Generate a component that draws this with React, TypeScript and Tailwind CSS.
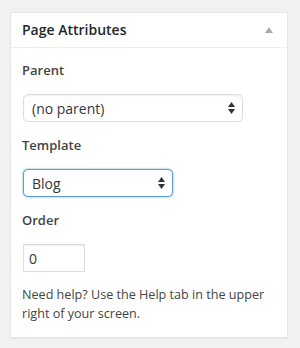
import { useState } from "react";

const font = { fontFamily: '"Open Sans", "Noto Sans", sans-serif' };

export default function App() {
  const [parent, setParent] = useState("");
  const [template, setTemplate] = useState("blog");
  const [order, setOrder] = useState("0");

  return (
    <div className="h-[348px] w-[300px] bg-[#f1f1f1] pl-[10px] pr-[12px] pt-[12px]" style={font}>
      <div className="border border-[#e5e5e5] bg-white shadow-[0_1px_1px_rgba(0,0,0,0.04)]">
        <div className="flex h-[35px] items-center justify-between border-b border-[#eeeeee] pl-[11px] pr-[14px]">
          <h2 className="text-[14px] font-semibold leading-none text-[#23282d]">Page Attributes</h2>
          <svg width="8" height="6" viewBox="0 0 8 6" className="mb-[1px]">
            <path d="M4 0 L8 6 L0 6 Z" fill="#aaaaaa" />
          </svg>
        </div>

        <div className="px-[11px] pb-[14px] pt-[12px] text-[#444]">
          <Label>Parent</Label>
          <SelectBox
            width="w-[220px]"
            value={parent}
            onChange={setParent}
            options={[{ value: "", label: "(no parent)" }]}
          />

          <Label>Template</Label>
          <SelectBox
            width="w-[150px]"
            focused
            value={template}
            onChange={setTemplate}
            options={[
              { value: "default", label: "Default Template" },
              { value: "blog", label: "Blog" },
            ]}
          />

          <Label>Order</Label>
          <input
            value={order}
            onChange={(e) => setOrder(e.target.value)}
            className="mb-[13px] ml-[1px] block h-[28px] w-[62px] border border-[#dddddd] px-[5px] text-[14px] text-[#32373c] shadow-[inset_0_1px_2px_rgba(0,0,0,0.07)] outline-none"
          />

          <p className="text-[12.6px] leading-[19px] text-[#444]">
            Need help? Use the Help tab in the upper right of your screen.
          </p>
        </div>
      </div>
    </div>
  );
}

function Label({ children }: { children: React.ReactNode }) {
  return <p className="mb-[14px] text-[13px] font-semibold leading-[20px] text-[#444]">{children}</p>;
}

function SelectBox({
  width,
  value,
  onChange,
  options,
  focused,
}: {
  width: string;
  value: string;
  onChange: (v: string) => void;
  options: { value: string; label: string }[];
  focused?: boolean;
}) {
  return (
    <div className={`relative mb-[13px] ml-[1px] ${width}`}>
      <select
        value={value}
        onChange={(e) => onChange(e.target.value)}
        className={
          focused
            ? "block h-[28px] w-full appearance-none rounded-[5px] border border-[#5b9dd9] bg-white pl-[8px] pr-[24px] text-[14px] text-[#32373c] shadow-[0_0_2px_rgba(30,140,190,0.8)] outline-none"
            : "block h-[28px] w-full appearance-none rounded-[5px] border border-[#dddddd] bg-white pl-[8px] pr-[24px] text-[14px] text-[#32373c] shadow-[inset_0_1px_2px_rgba(0,0,0,0.07)] outline-none"
        }
        style={font}
      >
        {options.map((o) => (
          <option key={o.value} value={o.value}>
            {o.label}
          </option>
        ))}
      </select>
      <svg
        width="7"
        height="12"
        viewBox="0 0 7 12"
        className="pointer-events-none absolute right-[8px] top-[8px]"
      >
        <path d="M3.5 0 L7 5 L0 5 Z" fill="#333333" />
        <path d="M0 7 L7 7 L3.5 12 Z" fill="#333333" />
      </svg>
    </div>
  );
}
